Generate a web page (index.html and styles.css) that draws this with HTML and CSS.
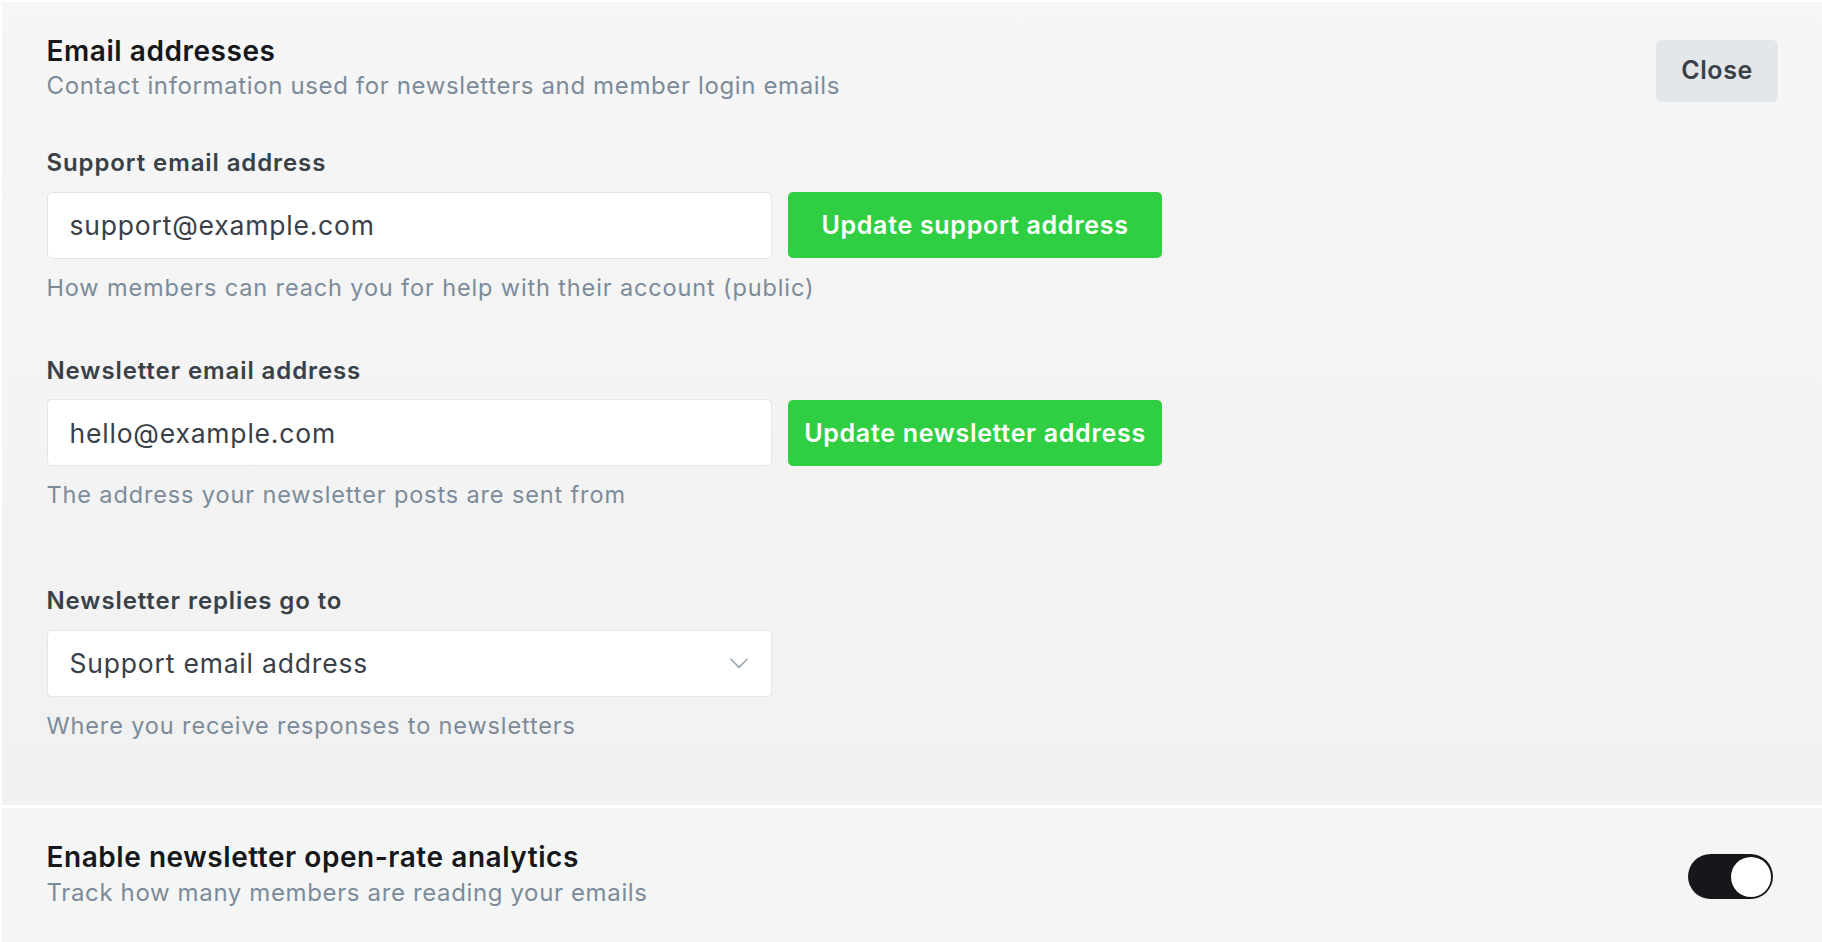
FILE: index.html
```html
<!DOCTYPE html>
<html lang="en">
<head>
<meta charset="utf-8">
<title>Email addresses</title>
<link rel="stylesheet" href="styles.css">
</head>
<body>
<div class="page">
  <section class="panel panel-main">
    <header class="panel-head">
      <div class="head-text">
        <h2 class="panel-title">Email addresses</h2>
        <p class="panel-sub">Contact information used for newsletters and member login emails</p>
      </div>
      <button class="btn-close" type="button">Close</button>
    </header>

    <div class="fields">
      <div class="field field-1">
        <label class="field-label">Support email address</label>
        <div class="field-row">
          <div class="input">support@example.com</div>
          <button class="btn-green" type="button">Update support address</button>
        </div>
        <p class="field-help">How members can reach you for help with their account (public)</p>
      </div>

      <div class="field field-2">
        <label class="field-label">Newsletter email address</label>
        <div class="field-row">
          <div class="input">hello@example.com</div>
          <button class="btn-green" type="button">Update newsletter address</button>
        </div>
        <p class="field-help">The address your newsletter posts are sent from</p>
      </div>

      <div class="field field-3">
        <label class="field-label">Newsletter replies go to</label>
        <div class="field-row">
          <div class="input select">
            <span>Support email address</span>
            <svg class="chev" width="18" height="11" viewBox="0 0 18 11" aria-hidden="true"><path d="M1 1.2 L9 9.4 L17 1.2" fill="none" stroke="#9aa6b2" stroke-width="1.6" stroke-linecap="round" stroke-linejoin="round"/></svg>
          </div>
        </div>
        <p class="field-help">Where you receive responses to newsletters</p>
      </div>
    </div>
  </section>

  <section class="panel panel-toggle">
    <div class="head-text">
      <h2 class="panel-title">Enable newsletter open-rate analytics</h2>
      <p class="panel-sub">Track how many members are reading your emails</p>
    </div>
    <div class="toggle" role="switch" aria-checked="true"><span class="knob"></span></div>
  </section>
</div>
</body>
</html>
```

FILE: styles.css
```css
* { box-sizing: border-box; }
html, body { margin: 0; padding: 0; }
body {
  background: #ffffff;
  font-family: Inter, "Noto Sans", "Liberation Sans", sans-serif;
  -webkit-font-smoothing: antialiased;
}
.page {
  width: 1822px;
  height: 942px;
  padding: 2px 0 0 2px;
  display: flex;
  flex-direction: column;
  overflow: hidden;
}
.panel {
  padding: 0 44px 0 44.5px;
}
.panel-main {
  height: 803px;
  padding-top: 31px;
  background: linear-gradient(180deg, #f5f6f5 0%, #f0f1f0 100%);
}
.panel-head {
  display: flex;
  justify-content: space-between;
  align-items: flex-start;
  height: 71px;
}
.panel-title {
  margin: 0;
  font-size: 28px;
  line-height: 36px;
  font-weight: 600;
  color: #15171a;
  letter-spacing: 0.55px;
}
.panel-sub {
  margin: 1px 0 0;
  font-size: 24px;
  line-height: 32px;
  font-weight: 400;
  color: #7c8b9a;
  letter-spacing: 0.63px;
}
.btn-close {
  margin-top: 7px;
  width: 122px;
  height: 62px;
  border: 0;
  border-radius: 6px;
  background: #e4e7ea;
  color: #394047;
  font-family: inherit;
  font-size: 25px;
  font-weight: 600;
  letter-spacing: 0.6px;
  padding: 0 0 2px;
}
.fields {
  margin-top: 44px;
  display: flex;
  flex-direction: column;
}
.field-2 { margin-top: 53px; }
.field-3 { margin-top: 76px; }
.field-label {
  display: block;
  font-size: 24px;
  line-height: 30px;
  font-weight: 600;
  color: #394047;
  letter-spacing: 0.9px;
}
.field-row {
  margin-top: 13.5px;
  display: flex;
  align-items: center;
  gap: 16.5px;
}
.input {
  width: 725px;
  height: 67px;
  background: #ffffff;
  border: 1.5px solid #e3e6e9;
  border-radius: 5px;
  padding: 0 22px;
  display: flex;
  align-items: center;
  font-size: 26.5px;
  color: #394047;
  letter-spacing: 0.8px;
}
.select {
  justify-content: space-between;
  padding-right: 23px;
}
.chev { display: block; }
.btn-green {
  width: 374px;
  height: 66px;
  border: 0;
  border-radius: 5px;
  background: #30cf43;
  color: #ffffff;
  font-family: inherit;
  font-size: 25px;
  font-weight: 600;
  letter-spacing: 0.7px;
  padding: 0;
}
.field-help {
  margin: 14px 0 0;
  font-size: 23.5px;
  line-height: 30px;
  color: #7c8b9a;
  letter-spacing: 0.87px;
}
.panel-toggle {
  flex: 1;
  border-top: 3px solid #ffffff;
  background: #f4f6f5;
  padding-top: 31px;
  display: flex;
  justify-content: space-between;
  align-items: flex-start;
}
.panel-toggle .panel-sub {
  margin-top: 1.5px;
}
.toggle {
  margin-top: 15px;
  margin-right: 5px;
  width: 85px;
  height: 45px;
  border-radius: 23px;
  background: #15171a;
  position: relative;
}
.knob {
  position: absolute;
  top: 2.5px;
  right: 2.5px;
  width: 40px;
  height: 40px;
  border-radius: 50%;
  background: #ffffff;
  box-shadow: 0 1px 3px rgba(0,0,0,0.15);
}
```
